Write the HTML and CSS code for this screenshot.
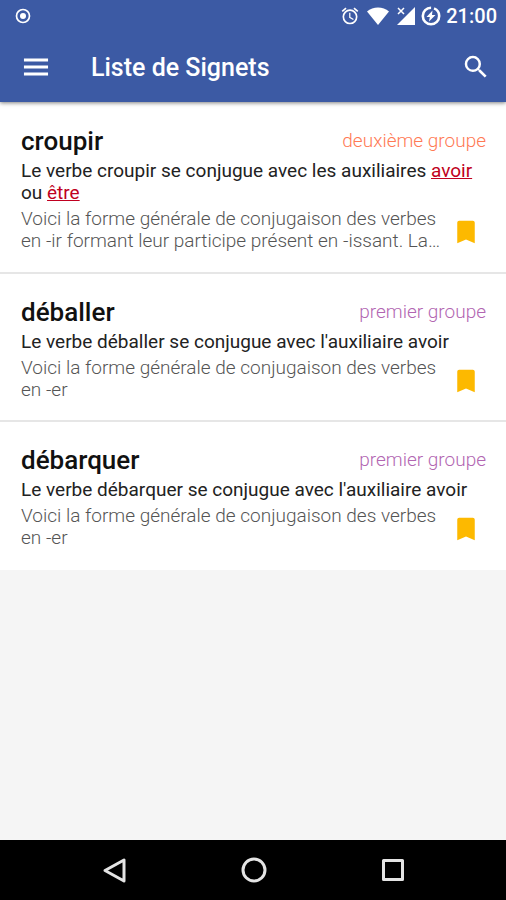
FILE: index.html
```html
<!DOCTYPE html>
<html lang="fr">
<head>
  <meta charset="UTF-8">
  <meta name="viewport" content="width=device-width, initial-scale=1.0">
  <title>Liste de Signets</title>
  <link rel="stylesheet" href="styles.css">
</head>
<body>
  <header class="top">
    <div class="status-bar">
      <svg class="record" viewBox="0 0 16 16" aria-hidden="true">
        <circle cx="8" cy="8" r="6.5" fill="none" stroke="currentColor" stroke-width="1.7"/>
        <circle cx="8" cy="8" r="3" fill="currentColor"/>
      </svg>
      <div class="status-right">
        <svg width="20" height="20" viewBox="0 0 24 24" aria-hidden="true">
          <path fill="currentColor" d="M22 5.7l-4.6-3.9-1.3 1.5 4.6 3.9L22 5.7zM7.9 3.4L6.6 1.9 2 5.7l1.3 1.5 4.6-3.8zM12.5 8H11v6l4.7 2.9.8-1.2-4-2.4V8zM12 4a9 9 0 1 0 0 18 9 9 0 0 0 0-18zm0 16a7 7 0 1 1 0-14 7 7 0 0 1 0 14z"/>
        </svg>
        <svg width="26" height="20" viewBox="0 0 26 20" aria-hidden="true">
          <path fill="currentColor" d="M2 5.5C8 0 18 0 24 5.5L13 19z"/>
        </svg>
        <svg width="20" height="20" viewBox="0 0 20 20" aria-hidden="true">
          <path fill="currentColor" d="M19 1v18H1z"/>
          <path class="signal-gap" d="M0 0h10v9H0z"/>
          <path fill="none" stroke="currentColor" stroke-width="1.5" d="M2 2l6 6M8 2L2 8"/>
        </svg>
        <svg width="20" height="20" viewBox="0 0 20 20" aria-hidden="true">
          <circle cx="10" cy="10" r="8.2" fill="none" stroke="currentColor" stroke-width="2.6" stroke-dasharray="48.5 3" stroke-dashoffset="10"/>
          <path fill="currentColor" d="M11.5 4.5L5.5 11h3.3l-.8 4.5L14.5 9H11z"/>
        </svg>
        <span class="clock">21:00</span>
      </div>
    </div>
    <div class="app-bar">
      <button type="button" aria-label="Menu">
        <svg width="34" height="34" viewBox="0 0 24 24" aria-hidden="true">
          <path fill="currentColor" d="M3.5 18h17v-2.2h-17V18zm0-4.9h17v-2.2h-17v2.2zm0-7.1v2.2h17V6h-17z"/>
        </svg>
      </button>
      <h1 class="app-title">Liste de Signets</h1>
      <button type="button" aria-label="Rechercher">
        <svg width="30" height="30" viewBox="0 0 24 24" aria-hidden="true">
          <path fill="currentColor" d="M15.5 14h-.79l-.28-.27A6.47 6.47 0 0 0 16 9.5 6.5 6.5 0 1 0 9.5 16c1.61 0 3.09-.59 4.23-1.57l.27.28v.79l5 4.99L20.49 19l-4.99-5zm-6 0C7.01 14 5 11.99 5 9.5S7.01 5 9.5 5 14 7.01 14 9.5 11.99 14 9.5 14z"/>
        </svg>
      </button>
    </div>
  </header>

  <main class="list">
    <article class="card">
      <div class="card-head">
        <h2 class="verb">croupir</h2>
        <span class="group second">deuxième groupe</span>
      </div>
      <p class="auxiliary">Le verbe croupir se conjugue avec les auxiliaires <a href="#avoir">avoir</a> ou <a href="#etre">être</a></p>
      <div class="card-foot">
        <p class="summary">Voici la forme générale de conjugaison des verbes en -ir formant leur participe présent en -issant. La…</p>
        <button class="bookmark" type="button" aria-label="Retirer croupir des signets">
          <svg width="30" height="30" viewBox="0 0 24 24" aria-hidden="true">
            <path fill="currentColor" d="M17.5 3h-11C5.7 3 5 3.7 5 4.5V21l7-3 7 3V4.5c0-.8-.7-1.5-1.5-1.5z"/>
          </svg>
        </button>
      </div>
    </article>

    <article class="card">
      <div class="card-head">
        <h2 class="verb">déballer</h2>
        <span class="group first">premier groupe</span>
      </div>
      <p class="auxiliary">Le verbe déballer se conjugue avec l'auxiliaire avoir</p>
      <div class="card-foot">
        <p class="summary">Voici la forme générale de conjugaison des verbes en -er</p>
        <button class="bookmark" type="button" aria-label="Retirer déballer des signets">
          <svg width="30" height="30" viewBox="0 0 24 24" aria-hidden="true">
            <path fill="currentColor" d="M17.5 3h-11C5.7 3 5 3.7 5 4.5V21l7-3 7 3V4.5c0-.8-.7-1.5-1.5-1.5z"/>
          </svg>
        </button>
      </div>
    </article>

    <article class="card">
      <div class="card-head">
        <h2 class="verb">débarquer</h2>
        <span class="group first">premier groupe</span>
      </div>
      <p class="auxiliary">Le verbe débarquer se conjugue avec l'auxiliaire avoir</p>
      <div class="card-foot">
        <p class="summary">Voici la forme générale de conjugaison des verbes en -er</p>
        <button class="bookmark" type="button" aria-label="Retirer débarquer des signets">
          <svg width="30" height="30" viewBox="0 0 24 24" aria-hidden="true">
            <path fill="currentColor" d="M17.5 3h-11C5.7 3 5 3.7 5 4.5V21l7-3 7 3V4.5c0-.8-.7-1.5-1.5-1.5z"/>
          </svg>
        </button>
      </div>
    </article>
  </main>

  <nav class="nav-bar" aria-label="Navigation système">
    <button class="nav-btn" type="button" aria-label="Retour">
      <svg width="28" height="28" viewBox="0 0 28 28" aria-hidden="true">
        <path d="M24 4v21L5 14.5z"/>
      </svg>
    </button>
    <button class="nav-btn" type="button" aria-label="Accueil">
      <svg width="28" height="28" viewBox="0 0 28 28" aria-hidden="true">
        <circle cx="15" cy="14" r="11"/>
      </svg>
    </button>
    <button class="nav-btn" type="button" aria-label="Applications récentes">
      <svg width="28" height="28" viewBox="0 0 28 28" aria-hidden="true">
        <path d="M5.5 4.5h19v19h-19z"/>
      </svg>
    </button>
  </nav>
</body>
</html>
```
FILE: styles.css
```css
* {
  box-sizing: border-box;
}
body {
  margin: 0;
  min-height: 100vh;
  display: flex;
  flex-direction: column;
  background: #f5f5f5;
  color: #111;
  font-family: Roboto, sans-serif;
  font-size: 19px;
  line-height: 22px;
}
h1, h2, p {
  margin: 0;
}
svg {
  display: block;
}
button {
  padding: 0;
  border: none;
  background: none;
  color: inherit;
  cursor: pointer;
}

/* status bar + toolbar */
.top {
  background: #3c5aa4;
  color: #fff;
  box-shadow: 0 1px 4px rgba(0, 0, 0, 0.5);
  z-index: 1;
}
.status-bar {
  display: flex;
  justify-content: space-between;
  align-items: center;
  height: 32px;
  padding: 0 9px 0 15px;
}
.record {
  width: 16px;
  height: 16px;
}
.status-right {
  display: flex;
  align-items: center;
  gap: 5px;
}
.signal-gap {
  fill: #3c5aa4;
}
.clock {
  font-size: 20px;
  font-weight: 500;
}
.app-bar {
  display: flex;
  align-items: center;
  height: 70px;
  padding: 0 15px 0 19px;
}
.app-title {
  flex: 1;
  padding: 2px 0 0 38px;
  font-size: 25px;
  font-weight: 500;
  line-height: 30px;
}

/* bookmarked verbs */
.list {
  flex: 1;
}
.card {
  padding: 24px 20px 20px 21px;
  background: #fff;
  border-bottom: 2px solid #e6e6e6;
}
.card + .card {
  padding: 23px 20px 19px 21px;
}
.card:last-child {
  border-bottom-color: #fff;
}
.card-head {
  display: flex;
  justify-content: space-between;
  align-items: center;
  margin-bottom: 4px;
}
.verb {
  font-size: 26px;
  font-weight: 500;
  line-height: 30px;
}
.group {
  font-weight: 300;
}
.first {
  color: #b266b2;
}
.second {
  color: #ff7a55;
}
.auxiliary {
  color: #222;
}
.auxiliary a {
  color: #c00020;
}
.card-foot {
  display: flex;
  justify-content: space-between;
  align-items: center;
  gap: 6px;
  margin-top: 4px;
}
.summary {
  flex: 1;
  color: #555;
  font-weight: 300;
}
.bookmark {
  margin: 4px 5px 0 0;
  color: #fdb900;
}

/* system navigation */
.nav-bar {
  display: flex;
  justify-content: center;
  align-items: center;
  gap: 111px;
  height: 60px;
  background: #000;
}
.nav-btn svg {
  fill: none;
  stroke: #e4e4e4;
  stroke-width: 3;
  stroke-linejoin: round;
}
```
